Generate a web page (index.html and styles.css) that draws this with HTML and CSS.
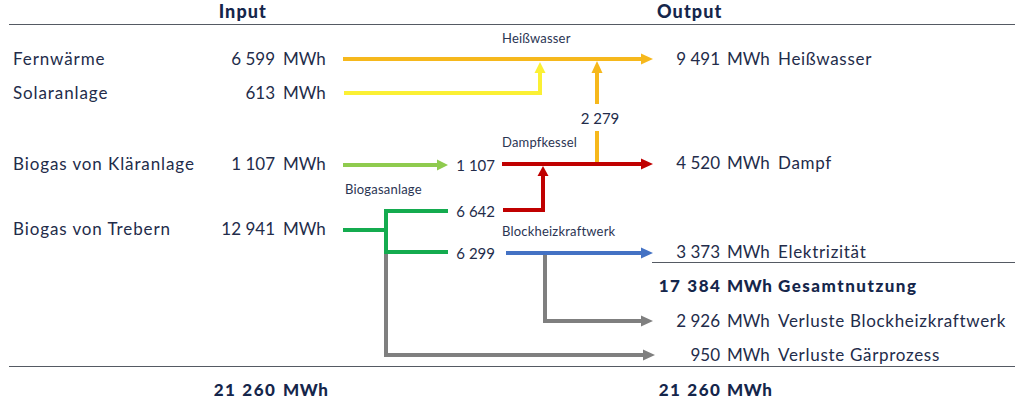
FILE: index.html
```html
<!DOCTYPE html>
<html lang="de">
<head>
<meta charset="utf-8">
<title>Energiefluss</title>
<link rel="stylesheet" href="styles.css">
</head>
<body>
<div class="page">
  <div class="head">
    <div class="head-in">Input</div>
    <div></div>
    <div class="head-out">Output</div>
  </div>
  <div class="body">
    <div class="inputs">
      <div class="in-row r1"><span class="name">Fernwärme</span><span class="num">6 599</span><span class="unit">MWh</span></div>
      <div class="in-row r2"><span class="name">Solaranlage</span><span class="num">613</span><span class="unit">MWh</span></div>
      <div class="in-row r3"><span class="name">Biogas von Kläranlage</span><span class="num">1 107</span><span class="unit">MWh</span></div>
      <div class="in-row r4"><span class="name">Biogas von Trebern</span><span class="num">12 941</span><span class="unit">MWh</span></div>
    </div>
    <svg class="flow" width="317" height="341" viewBox="335 25 317 341" xmlns="http://www.w3.org/2000/svg">
      <g fill="none" stroke-width="4" stroke-linejoin="miter">
        <!-- grey losses -->
        <polyline points="386,252 386,355 644,355" stroke="#7f7f7f"/>
        <polygon points="643,349.5 655,355 643,360.5" fill="#7f7f7f" stroke="none"/>
        <polyline points="545,253 545,321 642,321" stroke="#7f7f7f"/>
        <polygon points="641,315.5 653,321 641,326.5" fill="#7f7f7f" stroke="none"/>
        <!-- orange -->
        <line x1="343" y1="59" x2="642" y2="59" stroke="#f6b81c"/>
        <polygon points="641,53.5 653,59 641,64.5" fill="#f6b81c" stroke="none"/>
        <line x1="597" y1="104" x2="597" y2="72" stroke="#f6b81c"/>
        <polygon points="591.5,73 597,61 602.5,73" fill="#f6b81c" stroke="none"/>
        <line x1="597" y1="131" x2="597" y2="162" stroke="#f6b81c"/>
        <!-- yellow -->
        <polyline points="344,93 540,93 540,72" stroke="#fbf034"/>
        <polygon points="534.5,73 540,62 545.5,73" fill="#fbf034" stroke="none"/>
        <!-- light green -->
        <line x1="343" y1="165" x2="438" y2="165" stroke="#8fcb4e"/>
        <polygon points="437,159.5 448,165 437,170.5" fill="#8fcb4e" stroke="none"/>
        <!-- red -->
        <line x1="502" y1="164" x2="642" y2="164" stroke="#c00000"/>
        <polygon points="641,158.5 653,164 641,169.5" fill="#c00000" stroke="none"/>
        <polyline points="503,210 543,210 543,175" stroke="#c00000"/>
        <polygon points="537.5,176 543,166 548.5,176" fill="#c00000" stroke="none"/>
        <!-- dark green -->
        <line x1="343" y1="230" x2="386" y2="230" stroke="#14ab4f"/>
        <polyline points="448,211 386,211 386,252 448,252" stroke="#14ab4f"/>
        <!-- blue -->
        <line x1="506" y1="253" x2="642" y2="253" stroke="#4472c4"/>
        <polygon points="641,247.5 653,253 641,258.5" fill="#4472c4" stroke="none"/>
      </g>
      <g class="lbl">
        <text x="502" y="43">Heißwasser</text>
        <text x="502" y="147">Dampfkessel</text>
        <text x="345" y="194">Biogasanlage</text>
        <text x="502" y="236">Blockheizkraftwerk</text>
      </g>
      <g class="val">
        <text x="600" y="124" text-anchor="middle">2 279</text>
        <text x="495" y="171" text-anchor="end">1 107</text>
        <text x="495" y="217" text-anchor="end">6 642</text>
        <text x="495" y="259" text-anchor="end">6 299</text>
      </g>
    </svg>
    <div class="outputs">
      <div class="out-row o1"><span class="num">9 491</span><span class="unit">MWh</span><span class="name">Heißwasser</span></div>
      <div class="out-row o2"><span class="num">4 520</span><span class="unit">MWh</span><span class="name">Dampf</span></div>
      <div class="out-row o3"><span class="num">3 373</span><span class="unit">MWh</span><span class="name">Elektrizität</span></div>
      <div class="out-row o4 strong"><span class="num">17 384</span><span class="unit">MWh</span><span class="name">Gesamtnutzung</span></div>
      <div class="out-row o5"><span class="num">2 926</span><span class="unit">MWh</span><span class="name">Verluste Blockheizkraftwerk</span></div>
      <div class="out-row o6"><span class="num">950</span><span class="unit">MWh</span><span class="name">Verluste Gärprozess</span></div>
    </div>
  </div>
  <div class="totals">
    <div class="in-row strong"><span class="name"></span><span class="num">21 260</span><span class="unit">MWh</span></div>
    <div></div>
    <div class="out-row strong"><span class="num">21 260</span><span class="unit">MWh</span><span class="name"></span></div>
  </div>
</div>
</body>
</html>
```

FILE: styles.css
```css
html, body {
  margin: 0;
  padding: 0;
  background: #ffffff;
}

body {
  font-family: "Lato", "Noto Sans", sans-serif;
  color: #232c4a;
  width: 1024px;
  height: 404px;
  overflow: hidden;
}

.page {
  padding: 0 9px;
}

.head,
.body,
.totals {
  display: grid;
  grid-template-columns: 326px 317px 363px;
}

.head {
  height: 24px;
  border-bottom: 1px solid #555a63;
  font-weight: 900;
  font-size: 18px;
  line-height: 22px;
  letter-spacing: 1.1px;
  color: #15264b;
}

.head-in {
  text-align: right;
  padding-right: 68px;
}

.head-out {
  padding-left: 5px;
}

.body {
  height: 341px;
  border-bottom: 1px solid #555a63;
}

.flow {
  display: block;
  overflow: visible;
}

.lbl text {
  font-family: "Lato", "Noto Sans", sans-serif;
  font-size: 13px;
  letter-spacing: 0.2px;
  fill: #2b3553;
}

.val text {
  font-family: "Lato", "Noto Sans", sans-serif;
  font-size: 15px;
  fill: #232c4a;
}

.inputs,
.outputs {
  display: flex;
  flex-direction: column;
}

.in-row,
.out-row {
  display: grid;
  font-size: 17px;
  line-height: 20px;
  height: 20px;
  white-space: nowrap;
}

.in-row {
  grid-template-columns: 197px 65px 60px;
  padding-left: 4px;
}

.in-row .name {
  letter-spacing: 0.9px;
}

.out-row .name {
  letter-spacing: 0.7px;
}

.in-row .num,
.out-row .num {
  text-align: right;
}

.in-row .unit {
  padding-left: 8px;
}

.out-row {
  grid-template-columns: 68px 58px 1fr;
}

.out-row .unit {
  padding-left: 7px;
}

.strong {
  font-weight: 900;
  color: #15264b;
}

.strong .num {
  letter-spacing: 1.6px;
  margin-right: -1.6px;
}

.strong .unit {
  letter-spacing: 0.6px;
}

.out-row.strong .name {
  letter-spacing: 1.5px;
}

.r1 { margin-top: 24px; }
.r2 { margin-top: 14px; }
.r3 { margin-top: 51px; }
.r4 { margin-top: 45px; }

.o1 { margin-top: 24px; }
.o2 { margin-top: 84px; }
.o3 {
  margin-top: 69px;
  border-bottom: 1px solid #555a63;
}
.o4 { margin-top: 13px; }
.o5 { margin-top: 15px; }
.o6 { margin-top: 14px; }

.totals .in-row,
.totals .out-row {
  margin-top: 13px;
}
```
